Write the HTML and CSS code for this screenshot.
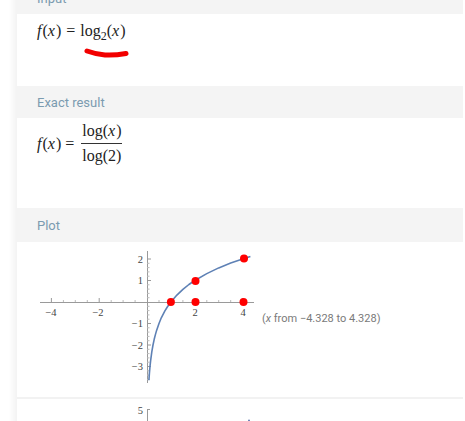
FILE: index.html
```html
<!DOCTYPE html>
<html lang="en">
<head>
  <meta charset="UTF-8">
  <title>log2 result</title>
  <link rel="stylesheet" href="styles.css">
</head>
<body>

  <div class="page">

    <!-- Input pod (scrolled partly out of view) -->
    <section class="pod">
      <div class="pod-head">Input</div>
      <div class="pod-body input-body">
        <div class="math">
          <i>f</i>(<i>x</i>)<span class="eq">=</span>log<sub>2</sub>(<i>x</i>)
        </div>
        <svg class="scribble" width="50" height="14" viewBox="0 0 50 14">
          <path d="M4 4 Q12 7 22 8 Q32 8.5 43 6.5" fill="none" stroke="#f20000" stroke-width="5" stroke-linecap="round"/>
        </svg>
      </div>
    </section>

    <!-- Exact result pod -->
    <section class="pod">
      <div class="pod-head">Exact result</div>
      <div class="pod-body exact-body">
        <span class="math"><i>f</i>(<i>x</i>)<span class="eq">=</span></span>
        <span class="frac math">
          <span class="num">log(<i>x</i>)</span>
          <span class="den">log(2)</span>
        </span>
      </div>
    </section>

    <!-- Plot pod -->
    <section class="pod">
      <div class="pod-head plot-head">Plot</div>
      <div class="pod-body plot-body">
        <svg class="plot" width="225" height="150" viewBox="0 0 225 150">
          <g stroke="#9a9a9a" stroke-width="1" fill="none">
            <path d="M5 57.5 H219"/>
            <path d="M112.5 6 V138"/>
            <!-- x ticks -->
            <path d="M16.4 57 V53 M64.2 57 V53 M159.8 57 V53 M207.6 57 V53"/>
            <path stroke="#bbb" d="M28.4 57 V55 M40.3 57 V55 M52.3 57 V55 M76.2 57 V55 M88.1 57 V55 M100.1 57 V55 M124 57 V55 M135.9 57 V55 M147.9 57 V55 M171.8 57 V55 M183.7 57 V55 M195.7 57 V55"/>
            <!-- y ticks -->
            <path d="M112 14 H116 M112 35.5 H116 M112 78.5 H116 M112 100 H116 M112 121.5 H116"/>
            <path stroke="#bbb" d="M112 18.3 H114.5 M112 22.6 H114.5 M112 26.9 H114.5 M112 31.2 H114.5 M112 39.8 H114.5 M112 44.1 H114.5 M112 48.4 H114.5 M112 52.7 H114.5 M112 61.3 H114.5 M112 65.6 H114.5 M112 69.9 H114.5 M112 74.2 H114.5 M112 82.8 H114.5 M112 87.1 H114.5 M112 91.4 H114.5 M112 95.7 H114.5 M112 104.3 H114.5 M112 108.6 H114.5 M112 112.9 H114.5 M112 117.2 H114.5 M112 125.8 H114.5 M112 130.1 H114.5 M112 134.4 H114.5"/>
          </g>
          <g class="tick-label" text-anchor="middle">
            <text x="16" y="71">−4</text>
            <text x="63" y="71">−2</text>
            <text x="160" y="71">2</text>
            <text x="208" y="71">4</text>
          </g>
          <g class="tick-label" text-anchor="end">
            <text x="108" y="18">2</text>
            <text x="108" y="39">1</text>
            <text x="108" y="82">−1</text>
            <text x="108" y="104">−2</text>
            <text x="108" y="125">−3</text>
          </g>
          <polyline fill="none" stroke="#5e81b5" stroke-width="1.6" stroke-linejoin="round"
            points="113.9,135.3 114.4,128.4 115.0,121.5 115.6,115.8 116.8,106.9 118.0,100.0 119.2,94.3 120.4,89.6 121.6,85.4 124.0,78.5 126.3,72.8 129.9,65.9 132.3,62.0 135.9,57 141.9,50.1 147.9,44.4 153.9,39.5 159.8,35.5 171.8,28.6 183.7,22.9 195.7,18.1 207.6,14 215.4,11.5"/>
          <g fill="#ff0000">
            <circle cx="135.9" cy="57" r="4"/>
            <circle cx="160.5" cy="36" r="4"/>
            <circle cx="160.5" cy="57" r="4"/>
            <circle cx="209" cy="13.5" r="4"/>
            <circle cx="208.5" cy="57" r="4"/>
          </g>
        </svg>
        <div class="range">(<i>x</i> from −4.328 to 4.328)</div>
      </div>
      <div class="pod-body next-plot">
        <svg class="plot" width="225" height="22" viewBox="0 0 225 22">
          <path d="M112.5 10 V22 M112 10.5 H115" stroke="#9a9a9a" fill="none"/>
          <text class="tick-label" x="108" y="15" text-anchor="end">5</text>
          <circle cx="214" cy="21.5" r="1" fill="#6a7fb8"/>
        </svg>
      </div>
    </section>

  </div>

</body>
</html>
```

FILE: styles.css
```css
body {
  margin: 0;
  background-color: #fff;
  color: #222;
  font-family: Roboto, "Liberation Sans", sans-serif;
  overflow: hidden;
}
.page {
  margin: -18px 0 0 17px;
  width: 446px;
  background-color: #fff;
  box-shadow: -4px 0 6px rgba(0, 0, 0, 0.05);
}
.pod-head {
  height: 32px;
  line-height: 34px;
  padding-left: 20px;
  background-color: #f4f4f4;
  color: #7b9bb0;
  font-size: 13px;
}
.plot-head {
  height: 34px;
  line-height: 36px;
}
.pod-body {
  padding: 0 20px;
}
.math {
  font-family: "Liberation Serif", "DejaVu Serif", serif;
  font-size: 16px;
  color: #222;
}
.math i {
  padding-right: 1px;
}
.eq {
  margin: 0 5px;
}
.math sub {
  font-size: 12px;
  vertical-align: -4px;
  line-height: 0;
}
.input-body {
  position: relative;
  height: 72px;
  padding-top: 8px;
  box-sizing: border-box;
}
.scribble {
  position: absolute;
  left: 66px;
  top: 33px;
}
.exact-body {
  height: 90px;
  box-sizing: border-box;
  padding: 3px 20px 42px;
  display: flex;
  align-items: center;
  gap: 3px;
}
.exact-body .eq {
  margin: 0 4px;
}
.frac {
  display: inline-flex;
  flex-direction: column;
  align-items: center;
}
.num {
  line-height: 18px;
  padding: 0 1px 3px;
  border-bottom: 1px solid #333;
}
.den {
  line-height: 18px;
  padding-top: 3px;
}
.plot-body {
  display: flex;
  align-items: flex-start;
  height: 155px;
  box-sizing: border-box;
  padding: 3px 0 0 18px;
}
.tick-label {
  font-family: "Liberation Serif", "DejaVu Serif", serif;
  font-size: 10.5px;
  fill: #444;
}
.range {
  margin: 67px 0 0 2px;
  font-size: 11px;
  color: #7a7a7a;
}
.next-plot {
  border-top: 2px solid #f2f2f2;
  padding: 0 0 0 18px;
  height: 30px;
}
.next-plot svg {
  display: block;
}
```
